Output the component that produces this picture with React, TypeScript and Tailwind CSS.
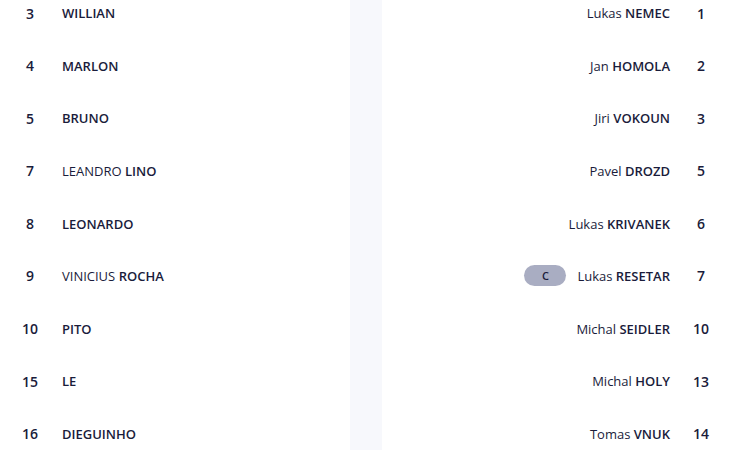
const home = [
  { n: 3, first: '', last: 'WILLIAN' },
  { n: 4, first: '', last: 'MARLON' },
  { n: 5, first: '', last: 'BRUNO' },
  { n: 7, first: 'LEANDRO', last: 'LINO' },
  { n: 8, first: '', last: 'LEONARDO' },
  { n: 9, first: 'VINICIUS', last: 'ROCHA' },
  { n: 10, first: '', last: 'PITO' },
  { n: 15, first: '', last: 'LE' },
  { n: 16, first: '', last: 'DIEGUINHO' },
];

const away = [
  { n: 1, first: 'Lukas', last: 'NEMEC' },
  { n: 2, first: 'Jan', last: 'HOMOLA' },
  { n: 3, first: 'Jiri', last: 'VOKOUN' },
  { n: 5, first: 'Pavel', last: 'DROZD' },
  { n: 6, first: 'Lukas', last: 'KRIVANEK' },
  { n: 7, first: 'Lukas', last: 'RESETAR', captain: true },
  { n: 10, first: 'Michal', last: 'SEIDLER' },
  { n: 13, first: 'Michal', last: 'HOLY' },
  { n: 14, first: 'Tomas', last: 'VNUK' },
];

export default function App() {
  return (
    <div className="h-[450px] w-[730px] overflow-hidden bg-white font-['Open_Sans',sans-serif] text-[14px] text-[#1a1c3b]">
      <div className="-mt-[13.3px] flex">
        <div className="w-[350px]">
          {home.map((p) => (
            <div key={p.n} className="flex h-[52.6px] items-center">
              <span className="w-[60px] text-center font-semibold">{p.n}</span>
              <span className="ml-[2px] mt-[2px] text-[13px]">
                {p.first && <span>{p.first} </span>}
                <span className="font-semibold">{p.last}</span>
              </span>
            </div>
          ))}
        </div>
        <div className="w-[32px] self-stretch bg-[#f7f8fc]" />
        <div className="w-[348px]">
          {away.map((p) => (
            <div key={p.n} className="flex h-[52.6px] items-center justify-end">
              {p.captain && (
                <span className="mr-[11px] flex h-[21px] w-[42px] items-center justify-center rounded-full bg-[#a9adc2] text-[11px] font-semibold">
                  C
                </span>
              )}
              <span className="mt-[2px] text-[13px]">
                <span>{p.first} </span>
                <span className="font-semibold">{p.last}</span>
              </span>
              <span className="ml-[2px] w-[58px] text-center font-semibold">{p.n}</span>
            </div>
          ))}
        </div>
      </div>
    </div>
  );
}
